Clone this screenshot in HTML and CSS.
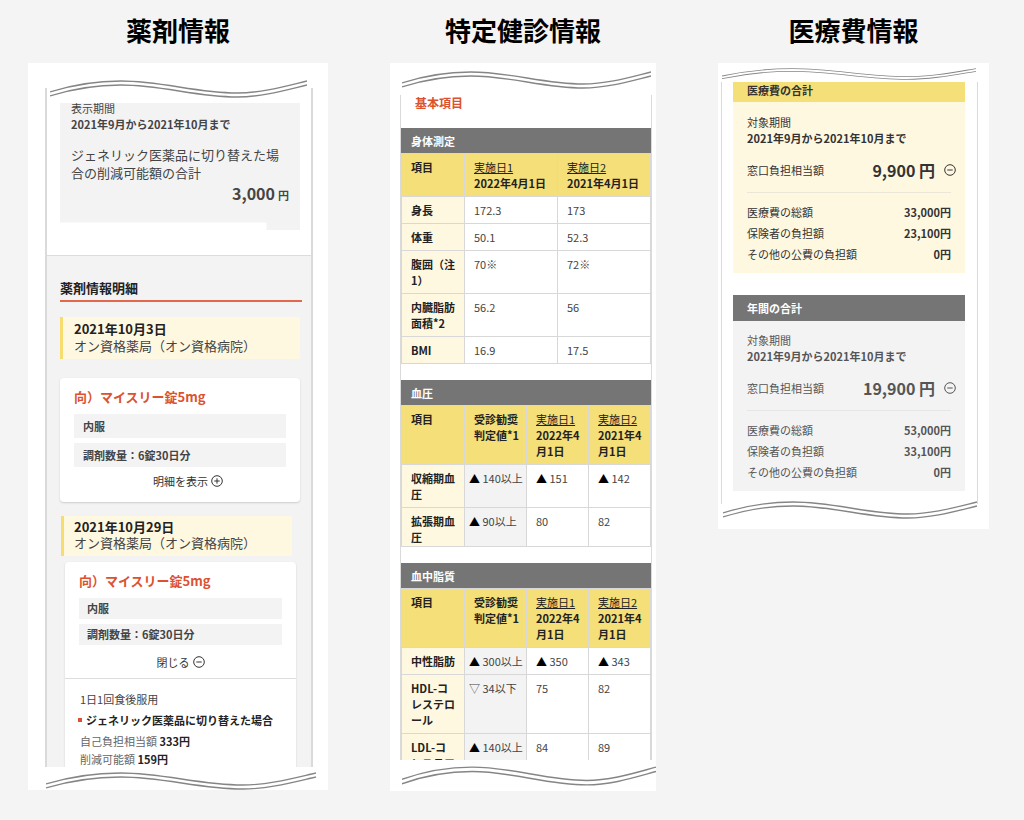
FILE: index.html
```html
<!DOCTYPE html>
<html lang="ja">
<head>
<meta charset="utf-8">
<meta name="viewport" content="width=device-width, initial-scale=1">
<title>薬剤・健診・医療費情報</title>
<link rel="stylesheet" href="styles.css">
</head>
<body>
<svg class="defs" aria-hidden="true">
  <symbol id="wave" viewBox="0 0 257 18" preserveAspectRatio="none">
    <path d="M0 12C22 5 47 1 71 1C112 1 146 13 187 13C212 13 236 6 257 1"/>
    <path d="M0 16C22 9 47 5 71 5C112 5 146 17 187 17C212 17 236 10 257 5"/>
  </symbol>
  <symbol id="minus" viewBox="0 0 12 12"><circle cx="6" cy="6" r="5.3"/><path d="M3.3 6h5.4"/></symbol>
  <symbol id="plus" viewBox="0 0 12 12"><circle cx="6" cy="6" r="5.3"/><path d="M3.3 6h5.4M6 3.3v5.4"/></symbol>
</svg>
<main class="board">
  <section class="column">
    <h1 class="title">薬剤情報</h1>
    <div class="sheet sheet-medicine">
      <svg class="wave wave-top" aria-hidden="true"><use href="#wave"/></svg>
      <div class="frame">
        <div class="saving-area">
          <div class="saving">
            <p class="saving-label">表示期間</p>
            <p class="period">2021年9月から2021年10月まで</p>
            <p class="saving-text">ジェネリック医薬品に切り替えた場合の削減可能額の合計</p>
            <p class="saving-total">3,000<span class="unit">円</span></p>
          </div>
        </div>
        <div class="details">
          <h2 class="details-title">薬剤情報明細</h2>
          <div class="visit">
            <p class="visit-date">2021年10月3日</p>
            <p>オン資格薬局（オン資格病院）</p>
          </div>
          <article class="drug">
            <h3 class="drug-name">向）マイスリー錠5mg</h3>
            <p class="tag">内服</p>
            <p class="tag">調剤数量：6錠30日分</p>
            <button class="toggle toggle-open" type="button">明細を表示<svg class="icon" aria-hidden="true"><use href="#plus"/></svg></button>
          </article>
          <div class="visit visit-second">
            <p class="visit-date">2021年10月29日</p>
            <p>オン資格薬局（オン資格病院）</p>
          </div>
          <article class="drug drug-expanded">
            <h3 class="drug-name">向）マイスリー錠5mg</h3>
            <p class="tag">内服</p>
            <p class="tag">調剤数量：6錠30日分</p>
            <button class="toggle" type="button">閉じる<svg class="icon" aria-hidden="true"><use href="#minus"/></svg></button>
            <div class="dose">
              <p class="dose-usage">1日1回食後服用</p>
              <p class="dose-generic">ジェネリック医薬品に切り替えた場合</p>
              <p class="dose-line">自己負担相当額 <b>333円</b></p>
              <p class="dose-line dose-last">削減可能額 <b>159円</b></p>
            </div>
          </article>
        </div>
      </div>
      <svg class="wave wave-bottom" aria-hidden="true"><use href="#wave"/></svg>
    </div>
  </section>

  <section class="column">
    <h1 class="title">特定健診情報</h1>
    <div class="sheet sheet-checkup">
      <svg class="wave wave-top" aria-hidden="true"><use href="#wave"/></svg>
      <div class="frame">
        <h2 class="basic-title">基本項目</h2>
        <table class="results">
          <caption>身体測定</caption>
          <colgroup><col class="col-item"><col><col></colgroup>
          <thead><tr><th>項目</th><th><a href="#">実施日1</a><br>2022年4月1日</th><th><a href="#">実施日2</a><br>2021年4月1日</th></tr></thead>
          <tbody>
            <tr><th>身長</th><td>172.3</td><td>173</td></tr>
            <tr><th>体重</th><td>50.1</td><td>52.3</td></tr>
            <tr><th>腹囲（注<br>1）</th><td>70※</td><td>72※</td></tr>
            <tr><th>内臓脂肪<br>面積<sup>*</sup>2</th><td>56.2</td><td>56</td></tr>
            <tr><th>BMI</th><td>16.9</td><td>17.5</td></tr>
          </tbody>
        </table>
        <table class="results results-pressure">
          <caption>血圧</caption>
          <colgroup><col class="col-item"><col><col><col></colgroup>
          <thead><tr><th>項目</th><th>受診勧奨<br>判定値<sup>*</sup>1</th><th><a href="#">実施日1</a><br>2022年4<br>月1日</th><th><a href="#">実施日2</a><br>2021年4<br>月1日</th></tr></thead>
          <tbody>
            <tr><th>収縮期血<br>圧</th><td class="limit"><i>▲</i> 140以上</td><td><i>▲</i> 151</td><td><i>▲</i> 142</td></tr>
            <tr><th>拡張期血<br>圧</th><td class="limit"><i>▲</i> 90以上</td><td>80</td><td>82</td></tr>
          </tbody>
        </table>
        <table class="results results-lipid">
          <caption>血中脂質</caption>
          <colgroup><col class="col-item"><col><col><col></colgroup>
          <thead><tr><th>項目</th><th>受診勧奨<br>判定値<sup>*</sup>1</th><th><a href="#">実施日1</a><br>2022年4<br>月1日</th><th><a href="#">実施日2</a><br>2021年4<br>月1日</th></tr></thead>
          <tbody>
            <tr><th>中性脂肪</th><td class="limit"><i>▲</i> 300以上</td><td><i>▲</i> 350</td><td><i>▲</i> 343</td></tr>
            <tr><th>HDL-コ<br>レステロ<br>ール</th><td class="limit">▽ 34以下</td><td>75</td><td>82</td></tr>
            <tr><th>LDL-コ<br>レステロ</th><td class="limit"><i>▲</i> 140以上</td><td>84</td><td>89</td></tr>
          </tbody>
        </table>
      </div>
      <svg class="wave wave-bottom" aria-hidden="true"><use href="#wave"/></svg>
    </div>
  </section>

  <section class="column">
    <h1 class="title">医療費情報</h1>
    <div class="sheet sheet-cost">
      <svg class="wave wave-top" aria-hidden="true"><use href="#wave"/></svg>
      <div class="frame">
        <section class="cost cost-period">
          <h2 class="cost-title">医療費の合計</h2>
          <div class="cost-body">
            <p>対象期間</p>
            <p class="period">2021年9月から2021年10月まで</p>
            <div class="cost-own"><span>窓口負担相当額</span><span class="cost-amount">9,900 円</span><button class="fold" type="button" aria-label="内訳を閉じる"><svg class="icon" aria-hidden="true"><use href="#minus"/></svg></button></div>
            <dl class="cost-list">
              <div><dt>医療費の総額</dt><dd>33,000円</dd></div>
              <div><dt>保険者の負担額</dt><dd>23,100円</dd></div>
              <div><dt>その他の公費の負担額</dt><dd>0円</dd></div>
            </dl>
          </div>
        </section>
        <section class="cost cost-year">
          <h2 class="cost-title">年間の合計</h2>
          <div class="cost-body">
            <p>対象期間</p>
            <p class="period">2021年9月から2021年10月まで</p>
            <div class="cost-own"><span>窓口負担相当額</span><span class="cost-amount">19,900 円</span><button class="fold" type="button" aria-label="内訳を閉じる"><svg class="icon" aria-hidden="true"><use href="#minus"/></svg></button></div>
            <dl class="cost-list">
              <div><dt>医療費の総額</dt><dd>53,000円</dd></div>
              <div><dt>保険者の負担額</dt><dd>33,100円</dd></div>
              <div><dt>その他の公費の負担額</dt><dd>0円</dd></div>
            </dl>
          </div>
        </section>
      </div>
      <svg class="wave wave-bottom" aria-hidden="true"><use href="#wave"/></svg>
    </div>
  </section>
</main>
</body>
</html>
```
FILE: styles.css
```css
* { box-sizing: border-box; }

body {
  margin: 0;
  background: #f4f4f4;
  color: #444;
  font-family: "Noto Sans CJK JP", sans-serif;
  font-size: 11px;
  line-height: 16px;
}

h1, h2, h3, p, dl, dd { margin: 0; }

button {
  padding: 0;
  border: 0;
  background: none;
  color: inherit;
  font: inherit;
  cursor: pointer;
}

.defs { display: none; }

.board {
  display: grid;
  grid-template-columns: 300fr 266fr 271fr;
  align-items: start;
  gap: 62px;
  padding: 10px 35px 30px 28px;
}

.column { min-width: 0; }

.title {
  margin-bottom: 13px;
  color: #000;
  font-size: 26px;
  font-weight: 700;
  line-height: 40px;
  text-align: center;
  white-space: nowrap;
}

.sheet {
  display: flex;
  flex-direction: column;
  background: #fff;
}

.wave {
  display: block;
  align-self: stretch;
  height: 18px;
  fill: none;
  stroke: #858585;
  stroke-width: 1.3;
}

.frame {
  overflow: hidden;
  border: solid #dadada;
  border-width: 0 1px;
}

.icon {
  width: 12px;
  height: 12px;
  fill: none;
  stroke: currentColor;
  stroke-width: 1;
}

.period { font-weight: 700; }

/* Medicine */
.sheet-medicine { padding: 17px 15px 0 17px; }
.sheet-medicine .wave-top { margin: 0 6px 0 5px; }
.sheet-medicine .wave-bottom { margin: 5px -3px 0 1px; }
.sheet-medicine .frame { border-width: 0 2px; margin-top: -10px; padding-top: 15px; }

.saving-area { padding: 0 11px 25px 13px; }

.saving {
  padding: 0 11px 25px;
  background: #f3f3f3;
  clip-path: polygon(0 0, 100% 0, 100% 100%, 86% 100%, 86% 94%, 0 94%);
}

.saving-label { line-height: 11px; }
.saving .period { margin: 2px 0 14px; }
.saving-text { font-size: 13px; line-height: 18px; }

.saving-total {
  margin-top: 1px;
  font-size: 16px;
  font-weight: 700;
  line-height: 20px;
  text-align: right;
}

.unit { margin-left: 3px; font-size: 11px; }

.details {
  padding: 24px 11px 0 13px;
  border-top: 1px solid #dcdcdc;
  background: #f3f3f3;
}

.details-title {
  margin: 0 -2px 15px 0;
  padding-bottom: 4px;
  border-bottom: 2px solid #e2674c;
  color: #222;
  font-size: 13px;
  font-weight: 700;
  line-height: 16px;
}

.visit {
  padding: 3px 11px 5px;
  border-left: 3px solid #f7dd70;
  background: #fff8e1;
  font-size: 13px;
  line-height: 17px;
}

.visit-date { color: #222; font-weight: 700; }

.visit-second {
  margin: 14px 8px 6px 1px;
  padding: 3px 10px 5px;
  line-height: 16px;
}

.drug {
  margin-top: 19px;
  padding: 9px 14px 10px;
  border-radius: 4px;
  background: #fff;
  box-shadow: 0 1px 2px #ccc;
}

.drug-name {
  margin-bottom: 7px;
  color: #dc5230;
  font-size: 13px;
  font-weight: 700;
  line-height: 20px;
}

.tag {
  margin-bottom: 5px;
  padding: 4px 9px;
  background: #f3f3f3;
  font-weight: 700;
}

.toggle {
  display: flex;
  align-items: center;
  justify-content: center;
  gap: 3px;
  width: 100%;
  color: #333;
  line-height: 18px;
}

.toggle-open { padding: 0 0 2px 16px; }

.drug-expanded {
  margin: 0 4px 0 5px;
  padding-bottom: 0;
  border-radius: 4px 4px 0 0;
}

.drug-expanded .tag { padding: 3px 8px; line-height: 15px; }
.drug-expanded .toggle { padding: 3px 0 7px; }

.dose {
  margin: 0 -14px;
  padding: 12px 15px 0;
  border-top: 1px solid #ddd;
}

.dose-generic {
  display: flex;
  align-items: center;
  gap: 4px;
  margin: 5px -6px 5px -2px;
  color: #222;
  font-weight: 700;
  white-space: nowrap;
}

.dose-generic::before {
  width: 4px;
  height: 4px;
  background: #dc5230;
  content: "";
}

.dose-line { margin-bottom: 2px; color: #666; }
.dose-line b { color: #222; }
.dose-last { margin-bottom: 0; }

/* Checkup */
.sheet-checkup { padding: 8px 4px 5px 10px; }
.sheet-checkup .wave-top { margin: 0 1px 0 2px; }
.sheet-checkup .wave-bottom { height: 20px; margin: 6px -4px 0 2px; }
.sheet-checkup .frame { margin-top: 6px; }

.basic-title {
  margin: 0 14px 17px;
  color: #dc5230;
  font-size: 12px;
  font-weight: 700;
  line-height: 16px;
}

.results {
  width: 100%;
  border-collapse: collapse;
  table-layout: fixed;
  margin-bottom: 16px;
}

.results caption {
  padding: 5px 10px 4px;
  background: #757575;
  color: #fff;
  font-weight: 700;
  text-align: left;
}

.col-item { width: 63px; }

.results th,
.results td {
  padding: 5px 0 5px 9px;
  border: 1px solid #d8d8d8;
  text-align: left;
  vertical-align: top;
  white-space: nowrap;
}

.results th { color: #222; background: #fff8e1; font-weight: 700; }
.results thead th { background: #f5df78; }
.results a { color: inherit; font-weight: 400; }
.results i { color: #000; font-style: normal; }
.results sup { font-size: 11px; line-height: 0; vertical-align: 1px; }
.results .limit { padding-left: 4px; background: #f3f3f3; }
.results-pressure tbody tr:last-child > * { padding-bottom: 1px; }
.results-lipid { margin-bottom: -17px; }

/* Cost */
.sheet-cost { padding: 5px 11px 10px 3px; }
.sheet-cost .wave-top { height: 12px; margin: 0 2px 0 1px; }
.sheet-cost .wave-bottom { margin: -3px 1px 0 2px; }
.sheet-cost .frame { margin-top: 2px; padding: 0 12px 13px 11px; }

.cost-title {
  padding: 5px 14px;
  font-size: 11px;
  font-weight: 700;
}

.cost-period { margin-bottom: 22px; background: #fff8e1; color: #333; }
.cost-period .cost-title { padding: 0 14px 4px; background: #f5df78; }
.cost-year { background: #f3f3f3; color: #555; }
.cost-year .cost-title { background: #757575; color: #fff; }

.cost-body { padding: 12px 14px 8px; }
.cost-year .cost-body { padding-top: 11px; }

.cost-own {
  display: grid;
  grid-template-columns: 1fr auto auto;
  align-items: center;
  gap: 9px;
  margin-right: -5px;
  padding: 12px 0 10px;
}

.cost-amount { font-size: 16px; font-weight: 700; line-height: 24px; }
.fold { display: flex; }

.cost-list {
  padding-top: 9px;
  border-top: 1px solid #ebe7d8;
}

.cost-year .cost-list { border-color: #e6e6e6; }
.cost-list div { display: flex; justify-content: space-between; line-height: 21px; }
.cost-list dd { font-weight: 700; }
```
